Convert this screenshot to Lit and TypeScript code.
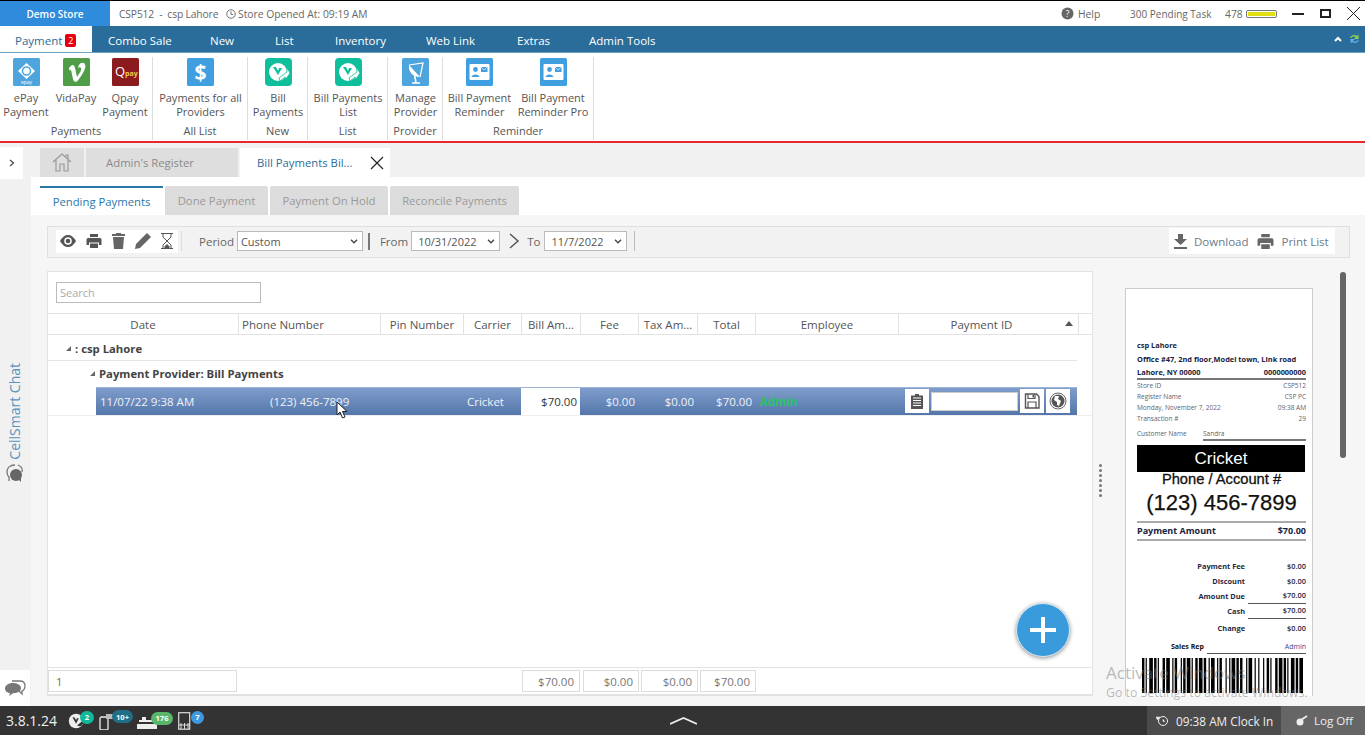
import { LitElement, html, css, svg } from "lit";
import { customElement } from "lit/decorators.js";
import { styleMap } from "lit/directives/style-map.js";

const card = (c: string) => svg`<rect width="27" height="28" rx="1.5" fill="${c}"/>`;
const icons: Record<string, unknown> = {
  epay: svg`${card("#4ea5de")}<path d="M13.5 5 L22 13 L13.5 21 L5 13Z" fill="#fff"/><circle cx="13.5" cy="13" r="4" fill="none" stroke="#4ea5de" stroke-width="1.6"/><text x="13.5" y="26" font-size="5" text-anchor="middle" fill="#fff" font-family="Open Sans">epay</text>`,
  vida: svg`${card("#4f9e47")}<path d="M6 10 C9 6 11 6 12 10 L14 19 C16 16 19 12 18 10 C17 9 16 9 15 10 C16 5 19 4 21.5 5.5 C24 8 21 15 14.5 23 C12 25 10.5 23 10 21 L8 12 L6.5 12.5Z" fill="#fff"/>`,
  qpay: svg`${card("#8c1b20")}<text x="3" y="18" font-size="13" fill="#fff" font-family="Open Sans">Q</text><text x="13" y="18" font-size="7" fill="#f1c84b" font-family="Open Sans" font-weight="700">pay</text>`,
  dollar: svg`${card("#3f9fe0")}<text x="13.5" y="22" font-size="21" text-anchor="middle" fill="#fff" font-weight="700" font-family="Open Sans">$</text>`,
  bill: svg`<rect width="27" height="28" rx="4" fill="#0fbf9c"/><circle cx="13" cy="14" r="9" fill="#fff"/><path d="M8 9 L13 17 L17 10 L14 10 L13 13 L11 9Z" fill="#0fbf9c"/><path d="M14 20 L22 14 L22 10 L25 15 L21 21 L20 19 L15 23Z" fill="#fff" stroke="#0fbf9c" stroke-width=".8"/>`,
  dish: svg`${card("#4ea5de")}<path d="M7 7 C6 14 11 19 18 19 Z" fill="#fff"/><path d="M7 7 L21 5 L18 19" fill="none" stroke="#fff" stroke-width="1.2"/><path d="M12 14 L14 25 M10 25 H18" stroke="#fff" stroke-width="1.6"/>`,
  card: svg`${card("#3f9fe0")}<rect x="3.5" y="6" width="20" height="16" rx="1" fill="#fff"/><circle cx="9.5" cy="11.5" r="2.4" fill="#3f9fe0"/><path d="M5.5 19 C6 15.5 13 15.5 13.5 19Z" fill="#3f9fe0"/><rect x="15" y="9" width="6.5" height="5" fill="#3f9fe0"/><path d="M15 9 L18.2 12 L21.5 9" fill="none" stroke="#fff" stroke-width=".7"/>`,
};

const ribbon = [
  { label: "Payments", w: 153, items: [
    { i: "epay", t: ["ePay", "Payment"], w: 52 }, { i: "vida", t: ["VidaPay"], w: 48 }, { i: "qpay", t: ["Qpay", "Payment"], w: 50 } ] },
  { label: "All List", w: 95, items: [{ i: "dollar", t: ["Payments for all", "Providers"], w: 95 }] },
  { label: "New", w: 60, items: [{ i: "bill", t: ["Bill", "Payments"], w: 60 }] },
  { label: "List", w: 80, items: [{ i: "bill", t: ["Bill Payments", "List"], w: 80 }] },
  { label: "Provider", w: 55, items: [{ i: "dish", t: ["Manage", "Provider"], w: 55 }] },
  { label: "Reminder", w: 151, items: [
    { i: "card", t: ["Bill Payment", "Reminder"], w: 73 }, { i: "card", t: ["Bill Payment", "Reminder Pro"], w: 74 } ] },
];
const menus = [["Combo Sale", 60], ["New", 23], ["List", 18], ["Inventory", 49], ["Web Link", 49], ["Extras", 30], ["Admin Tools", 65]] as [string, number][];
const heads = [["Date", "c"], ["Phone Number", "l"], ["Pin Number", "c"], ["Carrier", "c"], ["Bill Am...", "c"], ["Fee", "c"], ["Tax Am...", "c"], ["Total", "c"], ["Employee", "c"], ["Payment ID", "c"]];
const bars = [2,1,1,2,3,1,2,1,1,3,2,1,3,2,1,1,2,3,1,1,2,1,3,1,1,2,2,1,3,1,2,2,1,1,3,2,1,1,2,3,1,2,1,1,3,1,2,1,2,3,1,1,3,2,1,2,1,3,1,2,2,1,1,3,2,1,3,1,2,1,1,2,3,1,2,1,3];
const barTotal = bars.reduce((a, b) => a + b, 0);

const printer = svg`<path d="M4 1h8v3H4zM2 5h12a1.5 1.5 0 0 1 1.5 1.5V12H13V9.5H3V12H.5V6.5A1.5 1.5 0 0 1 2 5zM4 10.5h8V15H4z" fill="currentColor"/>`;

@customElement("app-root")
export class AppRoot extends LitElement {
  static styles = css`
    :host { display:flex; flex-direction:column; width:1365px; height:735px; overflow:hidden; position:relative; font-family:"Open Sans","Noto Sans",sans-serif; font-size:11.5px; color:#555; background:#f1f1f1; }
    * { box-sizing:border-box; }
    svg { display:block; flex:none; }
    .title { height:26px; flex:none; display:flex; align-items:center; background:#fff; border-top:1px solid #000; font-size:10.3px; color:#666; }
    .store { width:110px; height:100%; background:#2f8cdc; color:#fff; display:flex; align-items:center; justify-content:center; font-weight:600; font-size:10px; }
    .csp { margin-left:9px; width:107px; white-space:pre; letter-spacing:-.15px; }
    .opened { display:flex; align-items:center; gap:2px; }
    .tright { margin-left:auto; display:flex; align-items:center; }
    .help { display:flex; align-items:center; gap:4px; width:69px; }
    .pend { width:95px; font-size:10px; }
    .n478 { width:21px; }
    .batt { width:31px; height:8px; border:1px solid #777; border-radius:2px; padding:1px; margin-right:15px; }
    .batt i { display:block; height:100%; background:#e0df14; }
    .min { width:12px; height:2px; background:#222; margin-right:16px; }
    .max { width:11px; height:9px; border:2px solid #222; margin-right:16px; }
    .x { margin-right:5px; color:#222; }
    .menu { height:27px; flex:none; background:#2a6d9a; border-bottom:1px solid #6fa1c4; display:flex; align-items:flex-end; color:#fff; font-size:11.5px; position:relative; }
    .mtab { width:92px; height:26px; background:#fff; color:#2a6d9a; display:flex; align-items:center; padding:3px 0 0 15px; gap:3px; }
    .badge { background:#e8000f; color:#fff; font-size:9px; width:11px; height:13px; border-radius:2px; display:flex; align-items:center; justify-content:center; }
    .items { display:flex; gap:42px; margin-left:16px; height:26px; align-items:center; padding-top:3px; }
    .items span { white-space:nowrap; text-align:center; }
    .mright { margin-left:auto; height:26px; display:flex; align-items:center; gap:7px; padding-right:5px; }
    .ribbon { height:88px; flex:none; background:#fff; display:flex; padding-top:4px; }
    .grp { height:83px; border-right:1px solid #ddd; display:flex; flex-direction:column; align-items:center; color:#555; flex:none; }
    .gitems { display:flex; height:67px; align-self:flex-start; }
    .rit { display:flex; flex-direction:column; align-items:center; line-height:14px; white-space:nowrap; flex:none; }
    .rit svg { margin:1px 0 5px; }
    .rit div { font-size:11px; }
    .glabel { font-size:11px; line-height:14px; }
    .red { height:2px; flex:none; background:#e8262c; }
    .body { flex:1; display:flex; min-height:0; background:#f1f1f1; }
    .side { width:31px; flex:none; display:flex; flex-direction:column; align-items:flex-start; }
    .open { width:23px; height:32px; background:#fff; margin-top:4px; display:flex; align-items:center; justify-content:center; color:#555; }
    .chat { margin-top:184px; margin-left:4px; display:flex; flex-direction:column; align-items:center; gap:3px; width:22px; }
    .chat span { writing-mode:vertical-rl; transform:rotate(180deg); font-size:14px; color:#5b93bf; white-space:nowrap; line-height:22px; }
    .chatb { margin-top:auto; width:30px; height:36px; background:#fff; display:flex; align-items:center; justify-content:center; }
    main { flex:1; min-width:0; display:flex; flex-direction:column; }
    .tabs { height:34px; flex:none; padding-left:9px; display:flex; gap:2px; align-items:flex-end; }
    .tab { height:29px; background:#dedede; color:#8a8a8a; display:flex; align-items:center; justify-content:center; font-size:11.3px; }
    .t0 { width:44px; } .t1 { width:152px; padding-right:24px; }
    .t2 { width:150px; background:#fff; color:#2a6d9a; justify-content:flex-start; padding-left:17px; gap:17px; white-space:nowrap; }
    .t2 svg { color:#222; }
    .subs { height:38px; flex:none; background:#fff; padding-left:9px; display:flex; gap:2px; align-items:flex-end; }
    .sub { height:29px; background:#dcdcdc; color:#9a9a9a; display:flex; align-items:center; justify-content:center; font-size:11.3px; white-space:nowrap; border-radius:2px 2px 0 0; }
    .s0 { width:123px; background:#fff; color:#2a78aa; border-top:2px solid #2a78aa; border-radius:0; }
    .s1 { width:103px; } .s2 { width:118px; } .s3 { width:129px; }
    .work { flex:1; min-height:0; background:#f6f6f6; padding:11px 15px 10px 16px; display:flex; flex-direction:column; }
    .tool { height:32px; flex:none; background:#f2f2f2; border:1px solid #e0e0e0; display:flex; align-items:center; padding:0 0 2px 8px; color:#666; }
    .tbtns { display:flex; width:122px; height:23px; background:#fff; color:#555; align-items:center; gap:10px; padding-left:4px; margin-right:3px; flex:none; }
    .tsep { width:1px; height:20px; background:#ddd; margin-right:17px; }
    .sel { height:20px; background:#fff; border:1px solid #bbb; display:flex; align-items:center; justify-content:space-between; padding:0 4px 0 3px; color:#555; font-size:11px; }
    .p { width:126px; margin-left:3px; } .f { width:89px; margin-left:3px; padding-left:6px; } .to { width:83px; margin-left:4px; padding-left:6px; }
    .bar { width:2px; height:17px; background:#777; margin:0 10px 0 5px; }
    .chev { margin:0 7px 0 8px; color:#555; }
    .div2 { width:1px; height:20px; background:#bbb; margin-left:7px; }
    .dl { margin-left:auto; margin-right:14px; width:166px; height:26px; background:#fff; display:flex; align-items:center; color:#6a7a8c; padding-left:4px; gap:6px; white-space:nowrap; }
    .dl svg { color:#666; }
    .dl .pr { margin-left:2px; }
    .split { flex:1; min-height:0; margin-top:13px; display:flex; }
    .panel { width:1046px; flex:none; background:#fff; border:1px solid #e2e2e2; border-bottom-width:2px; display:flex; flex-direction:column; --cols:191px 142px 83px 58px 59px 58px 59px 58px 143px 180px 14px; }
    .srch { height:41px; flex:none; padding:10px 0 0 8px; }
    .srch div { width:205px; height:21px; border:1px solid #bbb; font-size:11px; color:#aaa; padding:2px 3px; }
    .head { height:22px; flex:none; display:grid; grid-template-columns:var(--cols); border-top:1px solid #e2e2e2; border-bottom:1px solid #e2e2e2; color:#555; }
    .head > div { border-right:1px solid #e2e2e2; display:flex; align-items:center; justify-content:center; white-space:nowrap; overflow:hidden; position:relative; padding-top:1px; }
    .head .l { justify-content:flex-start; padding-left:3px; }
    .head .sort { padding-right:14px; }
    .tri { position:absolute; right:5px; top:7px; width:0; height:0; border:4px solid transparent; border-top:0; border-bottom:5px solid #555; }
    .g { flex:none; display:flex; align-items:center; font-weight:700; color:#444; font-size:11.3px; gap:4px; }
    .g i { width:0; height:0; border-style:solid; border-width:0 0 5px 5px; border-color:transparent transparent #666 transparent; margin-left:1px; }
    .g1 { height:26px; padding:2px 0 0 17px; border-bottom:1px solid #e4e4e4; margin-right:15px; }
    .g2 { height:26px; padding:0 0 2px 41px; }
    .row { flex:none; height:28px; margin-left:48px; margin-right:15px; display:grid; grid-template-columns:142px 142px 83px 58px 59px 58px 59px 58px 143px 180px; background:linear-gradient(#7e9dcb,#5576ab); border-top:1px solid #9cb4d6; color:#eef2f8; align-items:center; }
    .row > div { white-space:nowrap; height:100%; display:flex; align-items:center; padding-bottom:1px; }
    .d { padding-left:4px; } .ph { padding-left:32px; } .cr { padding-left:4px; }
    .amt { justify-content:flex-end; padding-right:3px; }
    .w { background:#fff; color:#333; }
    .emp { padding-left:5px; color:#27c466; font-weight:700; }
    .acts { gap:2px; padding-left:7px; }
    .ab { width:24px; height:24px; background:#fff; display:flex; align-items:center; justify-content:center; color:#555; }
    .ai { width:87px; height:19px; background:#fff; border:1px solid #ccc; }
    .after { flex:1; border-top:1px solid #eee; }
    .foot { height:27px; flex:none; border-top:1px solid #e2e2e2; display:grid; grid-template-columns:var(--cols); padding-top:2px; }
    .foot div { height:22px; border:1px solid #ddd; display:flex; align-items:center; font-size:11.5px; color:#777; }
    .fi { grid-column:1; width:189px; padding-left:7px; color:#8a6a3a !important; }
    .ft { justify-content:flex-end; padding-right:5px; margin:0 0 0 2px; }
    .ft1 { grid-column:5; margin:0 1px 0 0; }
    .hand { width:32px; flex:none; display:flex; flex-direction:column; justify-content:center; gap:2px; padding:0 0 6px 6px; }
    .hand i { width:3px; height:3px; background:#777; border-radius:50%; }
    .rc { width:188px; flex:none; margin-top:17px; background:#fff; border:1px solid #ccc; border-bottom:0; overflow:hidden; padding:50px 6px 0 11px; color:#1e2a44; font-size:7.4px; line-height:12px; }
    .rr { display:flex; justify-content:space-between; white-space:nowrap; }
    .bd { font-weight:700; color:#16213d; }
    .co { height:13.5px; }
    .ln { border-bottom:2px solid #777; }
    .sm { font-size:6.5px; color:#5d6270; height:11px; line-height:11px; }
    .cust { justify-content:flex-start; border:0; margin-top:4px; height:13px; }
    .cust b { font-weight:400; width:66px; }
    .cust span { flex:1; border-bottom:2px solid #777; }
    .blk { background:#000; color:#fff; height:27px; margin-top:4px; margin-right:1px; font-family:"Liberation Sans",Arial,sans-serif; font-size:17px; line-height:27px; text-align:center; }
    .acc { font-family:"Liberation Sans",Arial,sans-serif; font-size:14.7px; font-weight:400; color:#111; text-align:center; line-height:14px; -webkit-text-stroke:.3px #111; }
    .num { font-family:"Liberation Sans",Arial,sans-serif; font-size:22px; color:#111; text-align:center; line-height:34px; height:35px; -webkit-text-stroke:.25px #111; }
    .pa { border-top:2px solid #aaa; border-bottom:2px solid #aaa; height:20px; align-items:center; font-size:9px; font-weight:700; color:#16213d; }
    .gapr { height:18px; }
    .tot { display:grid; grid-template-columns:108px 1fr; font-weight:700; height:15px; align-items:center; }
    .tot span:first-child { text-align:right; }
    .tot span:last-child { text-align:right; font-weight:600; }
    .ul span:last-child { border-bottom:1px solid #555; margin-left:3px; height:100%; line-height:13px; }
    .tot.chg { height:18px; }
    .rep { margin-top:4px; display:grid; grid-template-columns:36px 1fr; height:13px; margin-left:34px; font-size:7px; font-weight:700; color:#111; white-space:nowrap; }
    .rep span:last-child { border-bottom:1px solid #555; text-align:right; color:#4a3f8f; font-weight:400; }
    .bc { margin:4px 0 0 5px; }
    .pid { text-align:center; font-size:7px; color:#333; }
    .scroll { width:6px; height:186px; background:#666; border-radius:3px; margin:1px 0 0 27px; flex:none; }
    .bot { height:29px; flex:none; background:#333; color:#fff; display:flex; align-items:center; position:relative; }
    .ver { font-size:14px; margin-left:6px; width:61px; color:#f0f0f0; }
    .bi { position:relative; display:flex; align-items:center; }
    .pill { position:absolute; top:-1px; height:13px; border-radius:7px; font-size:7.5px; font-weight:700; color:#fff; display:flex; align-items:center; justify-content:center; }
    .b1 { width:32px; } .b2 { width:38px; } .b3 { width:41px; }
    .p1 { left:13px; width:14px; background:#12b89a; }
    .p2 { left:13px; width:21px; background:#1f6f86; }
    .p3 { left:14px; width:22px; background:#59b76b; }
    .p4 { left:13px; width:13px; background:#3d9ae2; }
    .chevb { position:absolute; left:670px; top:11px; }
    .clock { margin-left:auto; width:134px; height:100%; background:#4b4b4b; display:flex; align-items:center; gap:7px; padding-left:9px; font-size:11.8px; white-space:nowrap; color:#eee; }
    .off { width:84px; height:100%; background:#666; display:flex; align-items:center; gap:5px; padding-left:15px; font-size:11.6px; white-space:nowrap; color:#eee; }
    .fab { position:absolute; left:1016px; top:603px; width:54px; height:54px; border-radius:50%; background:#3a9bdc; border:1px solid #d9e9f4; box-shadow:0 1px 4px rgba(0,0,0,.45); display:flex; align-items:center; justify-content:center; }
    .cursor { position:absolute; left:336px; top:401px; }
    .wm { position:absolute; left:1106px; top:662px; color:rgba(120,120,120,.5); pointer-events:none; white-space:nowrap; }
    .wm div:first-child { font-size:17px; line-height:21px; }
    .wm div:last-child { font-size:12.300px; line-height:19px; }
  `;

  render() {
    return html`
      <div class="title">
        <div class="store">Demo Store</div>
        <div class="csp">CSP512  -  csp Lahore</div>
        <div class="opened"><svg width="10" height="10" viewBox="0 0 11 11"><circle cx="5.5" cy="5.5" r="4.7" fill="none" stroke="#666"/><path d="M5.5 2.5V6H8" fill="none" stroke="#666"/></svg>Store Opened At: 09:19 AM</div>
        <div class="tright">
          <div class="help"><svg width="13" height="13" viewBox="0 0 13 13"><circle cx="6.5" cy="6.5" r="6" fill="#666"/><text x="6.5" y="10" font-size="9" fill="#fff" text-anchor="middle" font-family="Open Sans">?</text></svg>Help</div>
          <div class="pend">300  Pending Task</div>
          <div class="n478">478</div>
          <div class="batt"><i></i></div>
          <div class="min"></div><div class="max"></div>
          <svg class="x" width="13" height="13" viewBox="0 0 13 13"><path d="M0 0L13 13M13 0L0 13" stroke="#222"/></svg>
        </div>
      </div>
      <div class="menu">
        <div class="mtab">Payment <span class="badge">2</span></div>
        <div class="items">${menus.map(([m, w]) => html`<span style=${styleMap({ width: w + "px" })}>${m}</span>`)}</div>
        <div class="mright">
          <svg width="8" height="6" viewBox="0 0 8 6"><path d="M1 5L4 2L7 5" fill="none" stroke="#fff" stroke-width="2"/></svg>
          <svg width="11" height="12" viewBox="0 0 11 12"><path d="M1 5C2 2 6 1 8 3L9.500 1.500V6H5L7 4C5 3 3 3.500 2 5Z" fill="#8fd14f"/><path d="M10 7C9 10 5 11 3 9L1.500 10.500V6H6L4 8C6 9 8 8.500 9 7Z" fill="#5fb0e5"/></svg>
        </div>
      </div>
      <div class="ribbon">
        ${ribbon.map((g) => html`<div class="grp" style=${styleMap({ width: g.w + "px" })}>
          <div class="gitems">${g.items.map((it) => html`<div class="rit" style=${styleMap({ width: it.w + "px" })}>
            <svg width="27" height="28" viewBox="0 0 27 28">${icons[it.i]}</svg>
            ${it.t.map((t) => html`<div>${t}</div>`)}
          </div>`)}</div>
          <div class="glabel">${g.label}</div>
        </div>`)}
      </div>
      <div class="red"></div>
      <div class="body">
        <div class="side">
          <div class="open"><svg width="6" height="8" viewBox="0 0 6 8"><path d="M1 1L4.500 4L1 7" fill="none" stroke="#555" stroke-width="1.400"/></svg></div>
          <div class="chat">
            <span>CellSmart Chat</span>
            <svg width="18" height="20" viewBox="0 0 18 20"><path d="M9 2C4 2 1 5 1 9C1 12 3 14 3 14L3 18" fill="none" stroke="#777" stroke-width="1.300"/><path d="M12 2C15 3 17 6 16 9" fill="none" stroke="#777" stroke-width="1.300"/><circle cx="10" cy="12" r="6" fill="#666"/><path d="M12 16L15 19L15 13Z" fill="#666"/></svg>
          </div>
          <div class="chatb"><svg width="22" height="18" viewBox="0 0 22 18"><path d="M8 2H16C19 2 21 4 21 7C21 10 19 12 18 12V15L15 12" fill="none" stroke="#777" stroke-width="1.300"/><path d="M9 4C4 4 1 6.500 1 9.500C1 12.500 4 14 6 14L5 17L9.500 14C14 14 17 12 17 9C17 6 13 4 9 4Z" fill="#777"/></svg></div>
        </div>
        <main>
          <div class="tabs">
            <div class="tab t0"><svg width="20" height="19" viewBox="0 0 20 19"><path d="M1 9L10 1L19 9M4 7V18H8V11H12V18H16V7M14 3.500V2H16V5.500" fill="none" stroke="#999" stroke-width="1.200"/></svg></div>
            <div class="tab t1">Admin's Register</div>
            <div class="tab t2">Bill Payments Bil...<svg width="14" height="14" viewBox="0 0 14 14"><path d="M1 1L13 13M13 1L1 13" stroke="currentColor" stroke-width="1.200"/></svg></div>
          </div>
          <div class="subs">
            <div class="sub s0">Pending Payments</div>
            <div class="sub s1">Done Payment</div>
            <div class="sub s2">Payment On Hold</div>
            <div class="sub s3">Reconcile Payments</div>
          </div>
          <div class="work">
            <div class="tool">
              <div class="tbtns">
                <svg width="16" height="12" viewBox="0 0 16 12"><path d="M0 6C3 1 5.500 0 8 0C10.500 0 13 1 16 6C13 11 10.500 12 8 12C5.500 12 3 11 0 6Z" fill="#555"/><circle cx="8" cy="6" r="3.800" fill="#fff"/><circle cx="8" cy="6" r="2.300" fill="#555"/></svg>
                <svg width="16" height="16" viewBox="0 0 16 16">${printer}</svg>
                <svg width="13" height="16" viewBox="0 0 13 16"><path d="M4 1V0H9V1H13V3H0V1ZM1 4H12L11 16H2Z" fill="#666"/></svg>
                <svg width="16" height="16" viewBox="0 0 16 16"><path d="M12 0L16 4L5 15L0 16L1 11Z" fill="#666"/></svg>
                <svg width="12" height="16" viewBox="0 0 12 16"><path d="M0 .5H12M0 15.500H12M2 1V4L10 12V15M10 1V4L2 12V15" fill="none" stroke="#555"/><path d="M3.500 13.500L6 11L8.500 13.500V15H3.500Z" fill="#555"/></svg>
              </div>
              <div class="tsep"></div>
              <span>Period</span>
              <div class="sel p">Custom ${this.arrow()}</div>
              <div class="bar"></div>
              <span>From</span>
              <div class="sel f">10/31/2022 ${this.arrow()}</div>
              <svg class="chev" width="12" height="16" viewBox="0 0 12 16"><path d="M2 1L10 8L2 15" fill="none" stroke="#555" stroke-width="1.500"/></svg>
              <span>To</span>
              <div class="sel to">11/7/2022 ${this.arrow()}</div>
              <div class="div2"></div>
              <div class="dl">
                <svg width="15" height="15" viewBox="0 0 15 15"><path d="M5 0H10V5H14L7.500 11L1 5H5ZM1 13H14V15H1Z" fill="#666"/></svg>
                <span>Download</span>
                <svg class="pr" width="19" height="17" viewBox="0 0 16 16">${printer}</svg>
                <span>Print List</span>
              </div>
            </div>
            <div class="split">
              <div class="panel">
                <div class="srch"><div>Search</div></div>
                <div class="head">
                  ${heads.map(([h, a], i) => html`<div class=${a === "l" ? "l" : i === 9 ? "sort" : ""}>${h}${i === 9 ? html`<span class="tri"></span>` : ""}</div>`)}
                  <div></div>
                </div>
                <div class="g g1"><i></i><span>: csp Lahore</span></div>
                <div class="g g2"><i></i><span>Payment Provider: Bill Payments</span></div>
                <div class="row">
                  <div class="d">11/07/22 9:38 AM</div>
                  <div class="ph">(123) 456-7899</div>
                  <div></div>
                  <div class="cr">Cricket</div>
                  <div class="amt w">$70.00</div>
                  <div class="amt">$0.00</div>
                  <div class="amt">$0.00</div>
                  <div class="amt">$70.00</div>
                  <div class="emp">Admin</div>
                  <div class="acts">
                    <div class="ab"><svg width="12" height="16" viewBox="0 0 12 16"><path d="M4 1H8V2.500H12V16H0V2.500H4Z" fill="#555"/><path d="M2 5H10M2 7.500H10M2 10H10M2 12.500H10" stroke="#fff"/></svg></div>
                    <div class="ai"></div>
                    <div class="ab"><svg width="16" height="16" viewBox="0 0 16 16"><path d="M1.500 1H12.500L15 3.500V15H1.500Z" fill="none" stroke="#555" stroke-width="1.400"/><path d="M4 1V5.500H11V1M4 15V9H12V15" fill="none" stroke="#555" stroke-width="1.200"/><rect x="8.500" y="2" width="1.500" height="2.500" fill="#555"/></svg></div>
                    <div class="ab"><svg width="18" height="18" viewBox="0 0 18 18"><circle cx="9" cy="9" r="8" fill="none" stroke="#666"/><circle cx="9" cy="9" r="6.500" fill="#555"/><path d="M6 4H10L9 7L12 9L10 14L8 13L8 10L5 8Z" fill="#fff"/></svg></div>
                  </div>
                </div>
                <div class="after"></div>
                <div class="foot">
                  <div class="fi">1</div>
                  <div class="ft ft1">$70.00</div>
                  <div class="ft">$0.00</div>
                  <div class="ft">$0.00</div>
                  <div class="ft">$70.00</div>
                </div>
              </div>
              <div class="hand">${[0, 1, 2, 3, 4, 5, 6].map(() => html`<i></i>`)}</div>
              <div class="rc">
                <div class="bd co">csp Lahore</div>
                <div class="bd co">Office #47, 2nd floor,Model town, Link road</div>
                <div class="bd co rr ln"><span>Lahore, NY 00000</span><span>0000000000</span></div>
                <div class="rr sm"><span>Store ID</span><span>CSP512</span></div>
                <div class="rr sm"><span>Register Name</span><span>CSP PC</span></div>
                <div class="rr sm"><span>Monday, November 7, 2022</span><span>09:38 AM</span></div>
                <div class="rr sm"><span>Transaction #</span><span>29</span></div>
                <div class="rr sm cust"><b>Customer Name</b><span>Sandra</span></div>
                <div class="blk">Cricket</div>
                <div class="acc">Phone / Account #</div>
                <div class="num">(123) 456-7899</div>
                <div class="rr pa"><span>Payment Amount</span><span>$70.00</span></div>
                <div class="gapr"></div>
                <div class="tot"><span>Payment Fee</span><span>$0.00</span></div>
                <div class="tot"><span>Discount</span><span>$0.00</span></div>
                <div class="tot ul"><span>Amount Due</span><span>$70.00</span></div>
                <div class="tot ul"><span>Cash</span><span>$70.00</span></div>
                <div class="tot chg"><span>Change</span><span>$0.00</span></div>
                <div class="rep"><span>Sales Rep</span><span>Admin</span></div>
                <div class="bc"><svg width="161" height="35" viewBox="0 0 161 35">${this.barcode()}</svg></div>
                <div class="pid">Payment ID</div>
              </div>
              <div class="scroll"></div>
            </div>
          </div>
        </main>
      </div>
      <div class="bot">
        <div class="ver">3.8.1.24</div>
        <div class="bi b1"><svg width="20" height="18" viewBox="0 0 22 18"><circle cx="10" cy="9" r="8" fill="#eee"/><path d="M6 5L10 12L13 6L11 6L10 8L8 5ZM11 14L17 9L17 7L19 10L15 15Z" fill="#333"/></svg><span class="pill p1">2</span></div>
        <div class="bi b2"><svg width="16" height="19" viewBox="0 0 16 19"><rect x="1" y="6" width="8" height="13" rx="1.500" fill="none" stroke="#eee" stroke-width="1.300"/><rect x="7" y="3" width="7" height="5" fill="#bbb"/></svg><span class="pill p2">10+</span></div>
        <div class="bi b3"><svg width="20" height="16" viewBox="0 0 20 16"><path d="M5 4H9V7H18V9H2V7H5ZM0 11H20V16H0Z" fill="#eee"/></svg><span class="pill p3">176</span></div>
        <div class="bi"><svg width="13" height="18" viewBox="0 0 13 18"><rect x=".7" y=".7" width="11" height="16.500" fill="none" stroke="#ddd" stroke-width="1.200"/><path d="M3 11V17M6.500 11V17M10 11V17M1 13H12" stroke="#ddd"/></svg><span class="pill p4">7</span></div>
        <svg class="chevb" width="27" height="8" viewBox="0 0 27 8"><path d="M0 7L13.500 1L27 7" fill="none" stroke="#eee" stroke-width="1.800"/></svg>
        <div class="clock"><svg width="13" height="12" viewBox="0 0 13 12"><circle cx="7" cy="6" r="4.500" fill="none" stroke="#eee"/><path d="M0 2H4L1.500 5Z M7 4V6.500H9" fill="#eee" stroke="#eee" stroke-width=".5"/></svg>09:38 AM Clock In</div>
        <div class="off"><svg width="13" height="11" viewBox="0 0 13 11"><circle cx="4" cy="7" r="3.500" fill="#eee"/><path d="M5 5L11 1" stroke="#eee" stroke-width="1.800"/></svg>Log Off</div>
      </div>
      <div class="fab"><svg width="30" height="30" viewBox="0 0 30 30"><path d="M15 2V28M2 15H28" stroke="#fff" stroke-width="4"/></svg></div>
      <svg class="cursor" width="12" height="18" viewBox="0 0 12 18"><path d="M1 1V14L4 11L6.500 17L9 16L6.500 10.500H11Z" fill="#fff" stroke="#222"/></svg>
      <div class="wm"><div>Activate Windows</div><div>Go to Settings to activate Windows.</div></div>
    `;
  }

  arrow() {
    return html`<svg width="8" height="5" viewBox="0 0 8 5"><path d="M1 .8L4 3.800L7 .8" fill="none" stroke="#444" stroke-width="1.300"/></svg>`;
  }

  barcode() {
    let x = 0;
    const k = 161 / barTotal;
    return bars.map((w, i) => {
      const r = i % 2 === 0 ? svg`<rect x="${x}" y="0" width="${w * k}" height="35" fill="#000"/>` : null;
      x += w * k;
      return r;
    });
  }
}
